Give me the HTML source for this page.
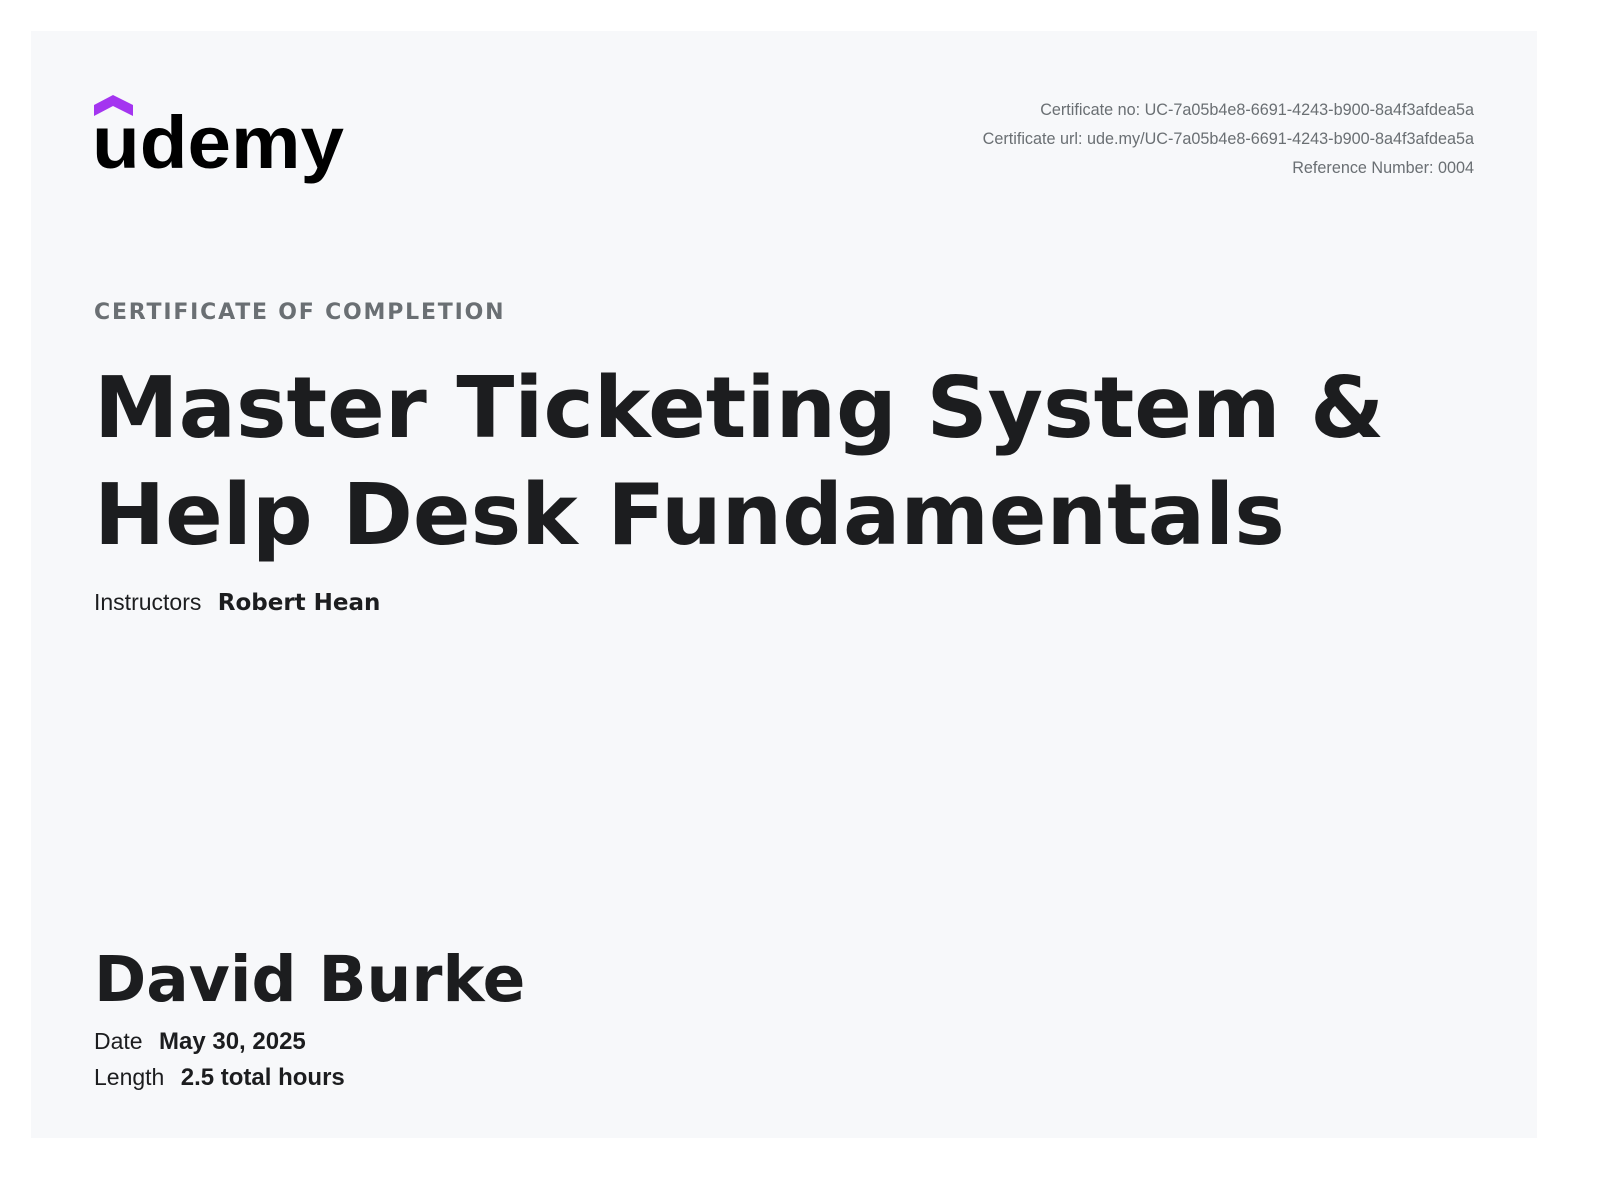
<!DOCTYPE html>
<html><head><meta charset="utf-8"><style>
html,body{margin:0;padding:0;background:#fff;width:1600px;height:1190px;overflow:hidden}
.card{position:absolute;left:31px;top:31px;width:1506px;height:1107px;background:#f7f8fa}
.a{position:absolute;white-space:nowrap;line-height:1}
.dv{font-family:"DejaVu Sans",sans-serif;font-weight:bold;color:#1c1d1f}
.ls{font-family:"Liberation Sans",sans-serif;color:#1c1d1f}
</style></head><body>
<div class="card"></div>
<svg style="position:absolute;left:0;top:0" width="400" height="200">
<polygon points="94,105 113,95 133,105 133,116 113,106 94,116" fill="#a435f0"/>
<text x="92" y="168" font-family="Liberation Sans" font-weight="bold" font-size="74" fill="#000" textLength="252" lengthAdjust="spacingAndGlyphs">udemy</text>
</svg>
<div class="a ls" style="right:126px;top:96px;font-size:16.2px;color:#6a6f73;line-height:29px;text-align:right">Certificate no: UC-7a05b4e8-6691-4243-b900-8a4f3afdea5a<br>Certificate url: ude.my/UC-7a05b4e8-6691-4243-b900-8a4f3afdea5a<br>Reference Number: 0004</div>
<div class="a dv" style="left:94px;top:302px;font-size:22px;letter-spacing:1.8px;color:#6a6f73">CERTIFICATE OF COMPLETION</div>
<div class="a dv" style="left:94px;top:355px;font-size:85px;line-height:107px">Master Ticketing System &amp;<br>Help Desk Fundamentals</div>
<div class="a ls" style="left:94px;top:591px;font-size:23px">Instructors <span class="dv" style="margin-left:10px;font-size:23px">Robert Hean</span></div>
<div class="a dv" style="left:94px;top:948px;font-size:63px">David Burke</div>
<div class="a ls" style="left:94px;top:1030px;font-size:23px">Date <b style="margin-left:10px;font-size:24px">May 30, 2025</b></div>
<div class="a ls" style="left:94px;top:1066px;font-size:23px">Length <b style="margin-left:10px;font-size:24px">2.5 total hours</b></div>
</body></html>
